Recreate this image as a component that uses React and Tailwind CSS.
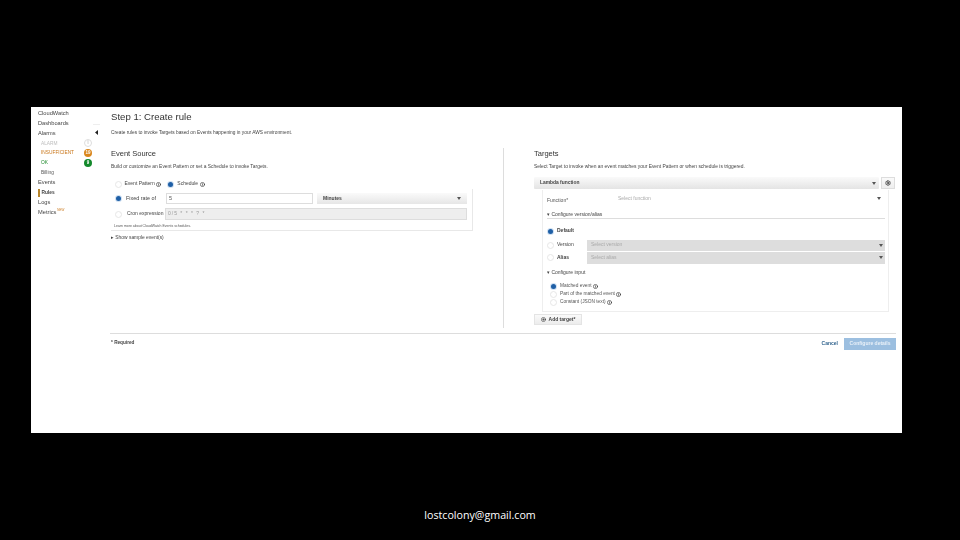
import { Info, Settings, CirclePlus } from 'lucide-react';

const SIDE_ITEMS = [
  { label: 'CloudWatch' },
  { label: 'Dashboards' },
  { label: 'Alarms' },
  { label: 'ALARM', sub: true, color: 'text-[#bdbdbd]', badge: 'border border-[#dddddd] text-[#dddddd] bg-white', count: '0' },
  { label: 'INSUFFICIENT', sub: true, color: 'text-[#c9761a]', badge: 'bg-[#d9861c] text-white', count: '19' },
  { label: 'OK', sub: true, color: 'text-[#1d8a2a]', badge: 'bg-[#14892c] text-white', count: '9' },
  { label: 'Billing', sub: true, color: 'text-[#555555]' },
  { label: 'Events' },
  { label: 'Rules', active: true },
  { label: 'Logs' },
  { label: 'Metrics', isNew: true },
];

function Caret() {
  return (
    <svg width="4" height="3" viewBox="0 0 4 3" className="shrink-0">
      <path d="M0 0h4L2 3z" fill="#555555" />
    </svg>
  );
}

function Radio({ on }) {
  if (on) {
    return (
      <span className="flex h-[7px] w-[7px] shrink-0 items-center justify-center rounded-full bg-[#cfe0f2]">
        <span className="h-[5px] w-[5px] rounded-full bg-[#1f5fa6]" />
      </span>
    );
  }
  return <span className="h-[7px] w-[7px] shrink-0 rounded-full border border-[#e6e6e6] bg-white" />;
}

function Tip() {
  return <Info size={5} strokeWidth={3} className="ml-[1.5px] shrink-0 text-[#333333]" />;
}

function Sidebar() {
  return (
    <aside className="flex w-[62px] shrink-0 flex-col pl-[7px] pr-[1px] pt-[1.5px] blur-[0.3px]">
      {SIDE_ITEMS.map((item) => (
        <div key={item.label} className="flex h-[9.9px] items-center text-[5.7px] text-[#444444]">
          {item.active && <span className="mr-[2px] h-[8px] w-[1.5px] bg-[#b8862b]" />}
          <span className={`${item.sub ? 'ml-[3px] text-[4.8px]' : ''} ${item.color || ''} ${item.active ? 'font-bold text-[4.8px]' : ''}`}>
            {item.label}
          </span>
          {item.isNew && <span className="ml-[1px] -translate-y-[2px] text-[3px] text-[#c9761a]">NEW</span>}
          {item.badge && (
            <span className={`ml-auto flex h-[8px] w-[8px] items-center justify-center rounded-full text-[4.5px] font-bold ${item.badge}`}>
              {item.count}
            </span>
          )}
        </div>
      ))}
    </aside>
  );
}

function EventSource() {
  return (
    <section className="w-[362px] shrink-0">
      <h2 className="h-[11px] text-[7.5px] leading-[11px] text-[#333333]">Event Source</h2>
      <p className="mt-[4px] h-[8px] text-[4.9px] leading-[8px] text-[#444444]">
        Build or customize an Event Pattern or set a Schedule to invoke Targets.
      </p>
      <div className="mt-[9px] flex h-[8px] items-center pl-[4px] text-[5px] text-[#444444]">
        <Radio />
        <span className="ml-[2.5px]">Event Pattern</span>
        <Tip />
        <span className="ml-[6px]"><Radio on /></span>
        <span className="ml-[3px]">Schedule</span>
        <Tip />
      </div>
      <div className="mt-[1px] flex h-[42px] flex-col border-r border-b border-[#e8e8e8] pl-[4px] pr-[5px] pt-[4px]">
        <div className="flex h-[11px] items-center text-[5.4px] text-[#444444]">
          <Radio on />
          <span className="ml-[3px] w-[41px] pl-[1px]">Fixed rate of</span>
          <div className="flex h-[11px] w-[147px] items-center border border-[#dddddd] pl-[2px] text-[5.5px] text-[#555555]">5</div>
          <div className="ml-[4px] flex h-[11px] flex-1 items-center justify-between bg-gradient-to-b from-[#fafafa] to-[#e6e6e6] px-[6px] text-[5px] font-bold text-[#444444]">
            Minutes
            <Caret />
          </div>
        </div>
        <div className="mt-[4px] flex h-[12px] items-center text-[5px] text-[#444444]">
          <Radio />
          <span className="ml-[5px] w-[38px]">Cron expression</span>
          <div className="flex h-[12px] flex-1 items-center border border-[#dddddd] bg-[#eeeeee] pl-[2px] text-[5px] tracking-[1px] text-[#999999]">
            0/5 * * * ? *
          </div>
        </div>
        <p className="ml-[-1px] mt-[3px] text-[3.5px] leading-[6px] text-[#555555]">
          Learn more about CloudWatch Events schedules.
        </p>
      </div>
      <p className="mt-[3px] text-[4.9px] leading-[8px] text-[#444444]">▸ Show sample event(s)</p>
    </section>
  );
}

function Targets() {
  return (
    <section className="ml-[30px] mr-[1px] h-[180px] flex-1 border-l border-[#dddddd] pl-[30px]">
      <h2 className="h-[11px] text-[7.5px] leading-[11px] text-[#333333]">Targets</h2>
      <p className="mt-[4px] h-[8px] text-[4.9px] leading-[8px] text-[#444444]">
        Select Target to invoke when an event matches your Event Pattern or when schedule is triggered.
      </p>
      <div className="mt-[6px] flex h-[12px] gap-[2px]">
        <div className="flex flex-1 items-center justify-between rounded-[1px] bg-gradient-to-b from-[#fafafa] to-[#e4e4e4] pl-[6px] pr-[3px] text-[4.9px] font-bold text-[#444444]">
          Lambda function
          <Caret />
        </div>
        <div className="flex w-[14px] items-center justify-center border border-[#dddddd] bg-gradient-to-b from-[#fafafa] to-[#eeeeee]">
          <Settings size={6} strokeWidth={3} className="text-[#333333]" />
        </div>
      </div>
      <div className="ml-[8px] mr-[6px] mt-[1px] h-[122px] border-r border-b border-l border-[#eeeeee] pl-[4px] pr-[3px]">
        <div className="flex h-[21px] items-center text-[5px] text-[#555555]">
          <span className="w-[71px] pt-[1px]">Function*</span>
          <span className="-translate-y-[2px] text-[#aaaaaa]">Select function</span>
          <span className="ml-auto mr-[4px] -translate-y-[2px]"><Caret /></span>
        </div>
        <p className="mt-[-1px] h-[8px] text-[5px] leading-[8px] text-[#444444]">▾ Configure version/alias</p>
        <div className="h-px bg-[#dddddd]" />
        <div className="mt-[9px] flex h-[7px] items-center text-[5px] text-[#444444]">
          <Radio on />
          <span className="ml-[3px] -translate-y-[1px] font-bold">Default</span>
        </div>
        <div className="mt-[4px] flex h-[12px] items-center text-[5px] text-[#444444]">
          <Radio />
          <span className="ml-[3px] w-[30px]">Version</span>
          <div className="flex h-[11px] flex-1 items-center justify-between bg-[#dddddd] pl-[4px] pr-[2px] text-[#aaaaaa]">
            Select version
            <Caret />
          </div>
        </div>
        <div className="flex h-[13px] items-center text-[5px] text-[#444444]">
          <Radio />
          <span className="ml-[3px] w-[30px] font-bold">Alias</span>
          <div className="flex h-[12px] flex-1 items-center justify-between bg-[#dddddd] pl-[4px] pr-[2px] text-[#aaaaaa]">
            Select alias
            <Caret />
          </div>
        </div>
        <p className="mt-[4px] h-[8px] text-[5px] leading-[8px] text-[#444444]">▾ Configure input</p>
        <div className="mt-[6px] flex flex-col pl-[3px] text-[4.8px] text-[#555555]">
          <div className="flex h-[8px] items-center"><Radio on /><span className="ml-[3px]">Matched event</span><Tip /></div>
          <div className="flex h-[8px] items-center"><Radio /><span className="ml-[3px]">Part of the matched event</span><Tip /></div>
          <div className="flex h-[8px] items-center"><Radio /><span className="ml-[3px]">Constant (JSON text)</span><Tip /></div>
        </div>
      </div>
      <div className="mt-[2px] flex h-[11px] w-[48px] items-center justify-center gap-[3px] border border-[#e4e4e4] bg-gradient-to-b from-[#fafafa] to-[#ececec] text-[5px] font-bold text-[#444444]">
        <CirclePlus size={5} strokeWidth={3} />
        Add target*
      </div>
    </section>
  );
}

export default function App() {
  return (
    <div className="flex h-[540px] w-[960px] flex-col overflow-hidden bg-black pl-[31px] pt-[107px] font-['Liberation_Sans',sans-serif]">
      <div className="flex h-[326px] w-[871px] bg-white">
        <Sidebar />
        {/* collapse handle */}
        <div className="flex w-[17px] shrink-0 flex-col pt-[17px]">
          <div className="h-px w-[7px] bg-[#eeeeee]" />
          <svg width="3" height="5" viewBox="0 0 3 5" className="ml-[2px] mt-[5px]">
            <path d="M3 0v5L0 2.5z" fill="#222222" />
          </svg>
        </div>
        <main className="flex w-[786px] shrink-0 flex-col pl-[1px] blur-[0.3px]">
          <header className="h-[41px] pt-[3px]">
            <h1 className="h-[13px] text-[9.6px] leading-[13px] text-[#333333]">Step 1: Create rule</h1>
            <p className="mt-[6px] text-[4.8px] leading-[8px] text-[#444444]">
              Create rules to invoke Targets based on Events happening in your AWS environment.
            </p>
          </header>
          <div className="flex h-[180px]">
            <EventSource />
            <Targets />
          </div>
          <div className="ml-[-1px] mt-[5px] h-px bg-[#dddddd]" />
          <footer className="mt-[4px] flex h-[12px] items-center justify-between">
            <span className="-translate-y-[1px] text-[4.7px] font-bold text-[#444444]">* Required</span>
            <div className="flex items-center gap-[6px] text-[5px] font-bold">
              <span className="text-[#33658f]">Cancel</span>
              <span className="flex h-[12px] w-[52px] items-center justify-center bg-[#9cbfe0] text-[#e8f0f8]">Configure details</span>
            </div>
          </footer>
        </main>
      </div>
      <div className="ml-[-31px] mt-[75px] text-center font-['Open_Sans',sans-serif] text-[10.7px] leading-[14px] text-white">
        lostcolony@gmail.com
      </div>
    </div>
  );
}
